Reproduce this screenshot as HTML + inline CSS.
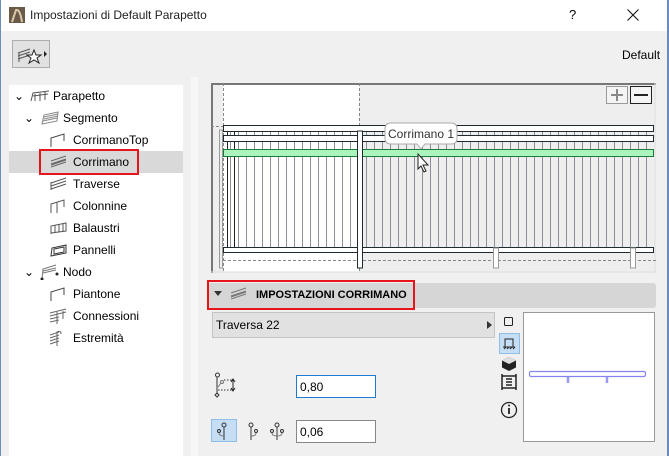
<!DOCTYPE html>
<html><head><meta charset="utf-8">
<style>
*{margin:0;padding:0;box-sizing:border-box}
body{width:669px;height:456px;overflow:hidden;background:#f0f0f0;font-family:"Liberation Sans",sans-serif;font-size:12px;color:#000;position:relative}
.abs{position:absolute}
.title{left:0;top:0;width:669px;height:31px;background:#fff}
.tree{left:9px;top:85px;width:174px;height:371px;background:#fff}
.row{position:absolute;height:22px;line-height:22px;font-size:12px}
</style></head><body>
<div class="abs" style="left:0;top:0;width:1px;height:456px;background:#6a8db5;z-index:5"></div>
<div class="abs" style="right:0;top:0;width:2px;height:456px;background:#6a8db5;z-index:5"></div>
<div class="abs title">
  <svg class="abs" style="left:9px;top:7px" width="16" height="16"><rect width="16" height="16" fill="#6b5a48"/><path d="M3 15 L7 3 Q11 2 13 15" stroke="#d8c8a8" stroke-width="2" fill="none"/></svg>
  <div class="abs" style="left:30px;top:8px;font-size:12px;color:#222">Impostazioni di Default Parapetto</div>
  <div class="abs" style="left:569px;top:7px;font-size:13px">?</div>
  <svg class="abs" style="left:627px;top:9px" width="12" height="12"><path d="M0.5 0.5 L11.5 11.5 M11.5 0.5 L0.5 11.5" stroke="#111" stroke-width="1"/></svg>
</div>
<div class="abs" style="left:12px;top:40px;width:38px;height:28px;border:1px solid #adadad;background:#e1e1e1">
 <svg width="36" height="26"><path d="M5 12 L17 8 M5 15 L17 11 M5 18 L17 14 M6 12 V21" stroke="#555" fill="none"/><path d="M21 9 L23 14 L28 14 L24 17 L26 22 L21 19 L16 22 L18 17 L14 14 L19 14 Z" fill="#fff" stroke="#222"/><path d="M31 10 L34 13 L31 16Z" fill="#222"/></svg>
</div>
<div class="abs" style="left:622px;top:48px;font-size:12px">Default</div>

<div class="abs tree">
 <div class="abs" style="left:0;top:66px;width:174px;height:22px;background:#d9d9d9"></div>
 <div class="abs" style="left:30px;top:64px;width:100px;height:26px;border:2px solid #e8141c"></div>
</div>
<div class="abs" style="left:191px;top:77px;width:7px;height:379px;background:#f7f7f7"></div>

<div class="row" style="left:14px;top:85px">⌄</div>
<svg class="abs" style="left:30px;top:90px" width="20" height="12"><path d="M1 11 L3 3 L19 1 M5 4 V11 M10 3 V11 M15 2 V10 M3 6 L18 4" stroke="#555" fill="none"/></svg>
<div class="row" style="left:53px;top:85px">Parapetto</div>
<div class="row" style="left:24px;top:107px">⌄</div>
<svg class="abs" style="left:40px;top:111px" width="20" height="14"><path d="M2 13 L4 4 L18 1 L17 10 Z M4 6 L18 3 M4 8 L18 5 M3 10 L17 7" stroke="#888" fill="none"/></svg>
<div class="row" style="left:63px;top:107px">Segmento</div>

<svg class="abs" style="left:50px;top:133px" width="20" height="14"><path d="M1 14 V5 L14 1 V8" stroke="#444" fill="none"/></svg>
<div class="row" style="left:73px;top:129px">CorrimanoTop</div>
<svg class="abs" style="left:50px;top:155px" width="20" height="14"><path d="M1 12 L16 7 M1 9 L16 4 M1 6 L16 1 M1 10 L16 5" stroke="#666" fill="none"/></svg>
<div class="row" style="left:73px;top:151px">Corrimano</div>
<svg class="abs" style="left:50px;top:177px" width="20" height="14"><path d="M1 12 L16 7 M1 9 L16 4 M1 6 L16 1 M1 13 V5" stroke="#555" fill="none"/></svg>
<div class="row" style="left:73px;top:173px">Traverse</div>
<svg class="abs" style="left:50px;top:199px" width="20" height="14"><path d="M1 14 V5 L14 1 V8 M7 3 V14" stroke="#555" fill="none"/></svg>
<div class="row" style="left:73px;top:195px">Colonnine</div>
<svg class="abs" style="left:50px;top:221px" width="20" height="14"><path d="M1 13 V5 L16 2 V10 L1 12 M5 4 V12 M9 3 V11 M13 3 V10" stroke="#555" fill="none"/></svg>
<div class="row" style="left:73px;top:217px">Balaustri</div>
<svg class="abs" style="left:50px;top:243px" width="20" height="14"><path d="M1 13 L2 5 L16 2 L16 10 Z M4 6 L14 4 L14 9 L4 11 Z" stroke="#333" fill="none"/></svg>
<div class="row" style="left:73px;top:239px">Pannelli</div>
<div class="row" style="left:24px;top:261px">⌄</div>
<svg class="abs" style="left:40px;top:264px" width="20" height="16"><path d="M2 15 L3 5 L16 1 M3 7 L16 4 M3 9 L16 6" stroke="#777" fill="none"/><circle cx="2" cy="15" r="1.5" fill="#222"/><circle cx="17" cy="10" r="1.5" fill="#222"/></svg>
<div class="row" style="left:63px;top:261px">Nodo</div>
<svg class="abs" style="left:50px;top:287px" width="20" height="14"><path d="M1 14 V5 L14 1 V8" stroke="#444" fill="none"/></svg>
<div class="row" style="left:73px;top:283px">Piantone</div>
<svg class="abs" style="left:49px;top:307px" width="20" height="18"><path d="M1 6 L17 2 M1 9 L17 5 M1 12 L10 10 M1 15 L10 13 M8 17 V5 M14 4 V12" stroke="#666" fill="none"/></svg>
<div class="row" style="left:73px;top:305px">Connessioni</div>
<svg class="abs" style="left:49px;top:329px" width="20" height="18"><path d="M1 6 L10 3 M1 9 L10 6 M1 12 L10 9 M1 15 L10 12 M8 17 V3 Q12 1 12 5" stroke="#666" fill="none"/></svg>
<div class="row" style="left:73px;top:327px">Estremità</div>

<svg class="abs" style="left:211px;top:83px" width="445" height="190">
 <defs><pattern id="b" x="0" y="0" width="8" height="10" patternUnits="userSpaceOnUse"><rect x="3" width="1" height="10" fill="#8a9096"/></pattern></defs>
 <rect x="0" y="0" width="445" height="190" fill="#eeeeee"/>
 <rect x="12" y="0" width="136" height="189" fill="#fff"/>
 <path d="M1 0 V190 M0 1 H445" stroke="#777" stroke-width="2"/>
 <path d="M444 0 V190 M0 189 H445" stroke="#ddd"/>
 <rect x="12" y="48" width="430" height="117" fill="url(#b)"/>
 <path d="M12.5 0 V190 M148.5 0 V190" stroke="#888" stroke-dasharray="3,2"/>
 <path d="M0 43.5 H12 M12 177.5 H445" stroke="#888" stroke-dasharray="3,2"/>
 <path d="M16.5 48 V165 M23.5 48 V165" stroke="#222"/>
 <rect x="12.5" y="42.5" width="430" height="6" fill="#fff" stroke="#1f2a30"/>
 <rect x="12.5" y="52.5" width="430" height="6" fill="#fff" stroke="#1f2a30"/>
 <rect x="12.5" y="66.5" width="430" height="7" fill="#a9f5bd" stroke="#1c7a3a"/>
 <rect x="12.5" y="164.5" width="430" height="5" fill="#fff" stroke="#1f2a30"/>
 <rect x="146.5" y="48" width="5" height="137" fill="#fff" stroke="#1f2a30"/>
 <rect x="282.5" y="165" width="5" height="20" fill="#fff" stroke="#999"/>
 <rect x="419.5" y="165" width="5" height="20" fill="#fff" stroke="#999"/>
 <rect x="8.5" y="47" width="3" height="138" fill="none" stroke="#999"/>
 <rect x="395.5" y="3.5" width="21" height="17" fill="#f4f4f4" stroke="#999"/>
 <path d="M400 12 H412 M406 6 V18" stroke="#888" stroke-width="2"/>
 <rect x="419.5" y="3.5" width="21" height="17" fill="#f4f4f4" stroke="#222"/>
 <path d="M423 12 H437" stroke="#222" stroke-width="2"/>
 <path d="M174 46 Q174 40 180 40 H240 Q246 40 246 46 V55 Q246 61 240 61 H214 L210 66 L206 61 H180 Q174 61 174 55 Z" fill="#fff" stroke="#aaa"/>
 <text x="177" y="55" font-family="Liberation Sans" font-size="12" fill="#333">Corrimano 1</text>
 <path d="M207 71 V86 L210 83 L213 89 L215 88 L212 82 L217 82 Z" fill="#fff" stroke="#222"/>
</svg>

<div class="abs" style="left:208px;top:283px;width:448px;height:25px;background:#d6d6d6;border-radius:3px"></div>
<div class="abs" style="left:207px;top:280px;width:208px;height:30px;border:2px solid #e8141c"></div>
<svg class="abs" style="left:214px;top:291px" width="8" height="6"><path d="M0 0 H8 L4 5Z" fill="#333"/></svg>
<svg class="abs" style="left:230px;top:287px" width="18" height="14"><path d="M1 12 L16 7 M1 9 L16 4 M1 6 L16 1 M1 10 L16 5" stroke="#777" fill="none"/></svg>
<div class="abs" style="left:256px;top:289px;font-weight:bold;font-size:11px">IMPOSTAZIONI CORRIMANO</div>

<div class="abs" style="left:212px;top:312px;width:283px;height:26px;background:#e1e1e1;border:1px solid #c4c4c4"></div>
<div class="abs" style="left:216px;top:318px;font-size:12px">Traversa 22</div>
<svg class="abs" style="left:487px;top:321px" width="5" height="8"><path d="M0 0 L5 4 L0 8Z" fill="#333"/></svg>

<svg class="abs" style="left:498px;top:312px" width="22" height="110">
 <rect x="6.5" y="5.5" width="8" height="8" fill="none" stroke="#222" rx="1"/>
 <rect x="1.5" y="21.5" width="20" height="20" fill="#c5def5" stroke="#8fbde6"/>
 <path d="M7 35 V27 H15 V35 M5 35 H17 M6 37 L8 35 M9 37 L11 35 M12 37 L14 35 M15 37 L17 35" stroke="#222" fill="none"/>
 <path d="M11 45 L18 48.5 V55.5 L11 59 L4 55.5 V48.5 Z" fill="#222"/><path d="M4 48.5 L11 52 L18 48.5 L11 45Z" fill="#ddd"/>
 <path d="M4 62 V78 M18 62 V78 M4 64 H18 M4 76 H18 M8 67 H14 M8 70 H14 M8 73 H14" stroke="#222" stroke-width="1.5" fill="none"/>
 <circle cx="11" cy="98" r="7.5" fill="none" stroke="#222" stroke-width="1.3"/><path d="M11 96 V102" stroke="#222" stroke-width="1.8"/><circle cx="11" cy="93.5" r="1" fill="#222"/>
</svg>

<div class="abs" style="left:523px;top:312px;width:132px;height:130px;background:#fff;border:1px solid #999"></div>
<svg class="abs" style="left:528px;top:368px" width="120" height="20"><rect x="1.5" y="3.5" width="116" height="5" rx="1.5" fill="#fff" stroke="#8585f0" stroke-width="1.2"/><path d="M40 9 V15 M79 9 V15" stroke="#9a9af5" stroke-width="2.5"/></svg>

<svg class="abs" style="left:212px;top:372px" width="26" height="26">
 <circle cx="5.5" cy="3" r="2" fill="none" stroke="#333"/><path d="M5 5 V22" stroke="#333"/>
 <circle cx="10" cy="10" r="1.5" fill="none" stroke="#777"/><path d="M6 15 L9 11" stroke="#777"/>
 <path d="M12 8 H20 M6 18 H20" stroke="#333" stroke-dasharray="1.5,1.5"/>
 <path d="M21 8 V18 M19 10 L21 7 L23 10 M19 16 L21 19 L23 16" stroke="#222" fill="none"/>
 <path d="M5 21 L7 23 L5 25 L3 23 Z" fill="none" stroke="#333"/>
</svg>
<div class="abs" style="left:296px;top:375px;width:80px;height:23px;background:#fff;border:1px solid #1a7ad4"></div>
<div class="abs" style="left:300px;top:380px;font-size:12px">0,80</div>

<div class="abs" style="left:211px;top:419px;width:26px;height:23px;background:#c5def5;border:1px solid #8fbde6"></div>
<svg class="abs" style="left:214px;top:421px" width="90" height="22">
 <circle cx="10" cy="4" r="2" fill="none" stroke="#333"/><path d="M10 6 V19" stroke="#333"/><circle cx="5" cy="10" r="1.5" fill="none" stroke="#333"/><path d="M5 12 Q5 15 10 15" stroke="#777" fill="none"/>
 <circle cx="37" cy="4" r="2" fill="none" stroke="#333"/><path d="M37 6 V19" stroke="#333"/><circle cx="42" cy="10" r="1.5" fill="none" stroke="#333"/><path d="M42 12 Q42 15 37 15" stroke="#777" fill="none"/>
 <circle cx="63" cy="4" r="2" fill="none" stroke="#333"/><path d="M63 6 V19" stroke="#333"/><circle cx="58" cy="10" r="1.5" fill="none" stroke="#333"/><circle cx="68" cy="10" r="1.5" fill="none" stroke="#333"/><path d="M58 12 Q58 15 63 15 Q68 15 68 12" stroke="#777" fill="none"/>
</svg>
<div class="abs" style="left:296px;top:420px;width:80px;height:23px;background:#fff;border:1px solid #888"></div>
<div class="abs" style="left:300px;top:425px;font-size:12px">0,06</div>
</body></html>
